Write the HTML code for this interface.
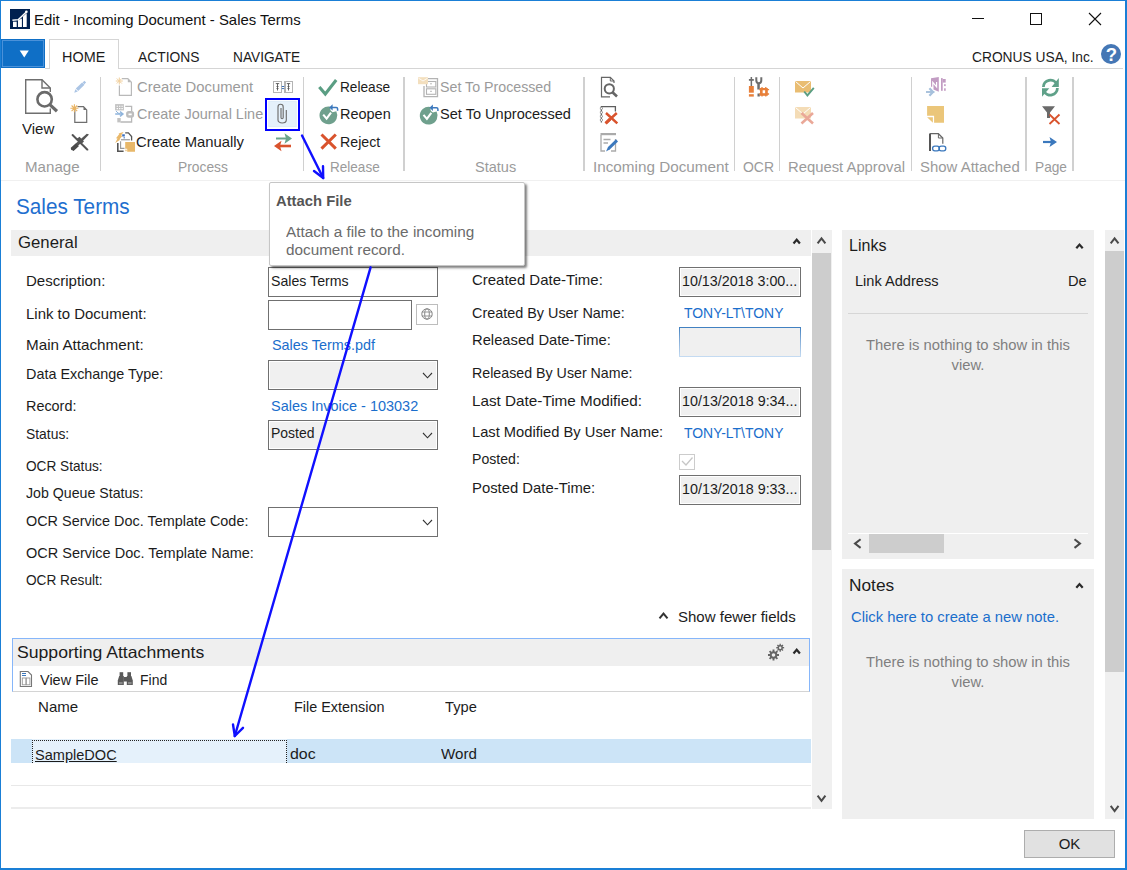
<!DOCTYPE html>
<html><head><meta charset="utf-8">
<style>
html,body{margin:0;padding:0;}
body{width:1127px;height:870px;position:relative;overflow:hidden;background:#fff;font-family:"Liberation Sans",sans-serif;color:#1c1c1c;}
.a{position:absolute;}
.t{position:absolute;white-space:nowrap;line-height:20px;}
svg{position:absolute;left:0;top:0;}
</style></head><body>

<div class="a" style="left:0px;top:0px;width:1127px;height:1px;background:#1a7fd6;"></div>
<div class="a" style="left:0px;top:0px;width:1px;height:870px;background:#1a7fd6;"></div>
<div class="a" style="left:1125px;top:0px;width:2px;height:870px;background:#1a7fd6;"></div>
<div class="a" style="left:0px;top:868px;width:1127px;height:2px;background:#1a7fd6;"></div>
<div class="t" style="left:34.45px;top:9.80px;font-size:15.00px;color:#111;transform-origin:0 0;transform:scaleX(0.9946);">Edit - Incoming Document - Sales Terms</div>
<div class="a" style="left:45px;top:68px;width:4px;height:1px;background:#d5d5d5;"></div>
<div class="a" style="left:119px;top:68px;width:1004px;height:1px;background:#d5d5d5;"></div>
<div class="a" style="left:49px;top:39px;width:70px;height:30px;box-sizing:border-box;border:1px solid #d5d5d5;border-bottom:none;background:#fff"></div>
<div class="t" style="left:61.80px;top:46.55px;font-size:14.30px;transform-origin:0 0;transform:scaleX(1.0092);">HOME</div>
<div class="t" style="left:137.90px;top:46.55px;font-size:14.30px;transform-origin:0 0;transform:scaleX(0.9676);">ACTIONS</div>
<div class="t" style="left:232.60px;top:46.55px;font-size:14.30px;transform-origin:0 0;transform:scaleX(0.9576);">NAVIGATE</div>
<div class="t" style="left:972.00px;top:46.55px;font-size:14.30px;transform-origin:0 0;transform:scaleX(0.9635);">CRONUS USA, Inc.</div>
<div class="a" style="left:1px;top:180px;width:1124px;height:1px;background:#f0f0f0;"></div>
<div class="t" style="left:22.18px;top:118.94px;font-size:14.60px;transform-origin:0 0;transform:scaleX(1.0295);">View</div>
<div class="t" style="left:24.58px;top:157.24px;font-size:14.60px;color:#9b9b9b;transform-origin:0 0;transform:scaleX(1.0351);">Manage</div>
<div class="t" style="left:178.38px;top:157.24px;font-size:14.60px;color:#9b9b9b;transform-origin:0 0;transform:scaleX(0.9465);">Process</div>
<div class="t" style="left:330.48px;top:157.24px;font-size:14.60px;color:#9b9b9b;transform-origin:0 0;transform:scaleX(0.9282);">Release</div>
<div class="t" style="left:474.68px;top:157.24px;font-size:14.60px;color:#9b9b9b;transform-origin:0 0;transform:scaleX(0.9958);">Status</div>
<div class="t" style="left:592.98px;top:157.24px;font-size:14.60px;color:#9b9b9b;transform-origin:0 0;transform:scaleX(1.0463);">Incoming Document</div>
<div class="t" style="left:742.98px;top:157.24px;font-size:14.60px;color:#9b9b9b;transform-origin:0 0;transform:scaleX(0.9557);">OCR</div>
<div class="t" style="left:788.18px;top:157.24px;font-size:14.60px;color:#9b9b9b;transform-origin:0 0;transform:scaleX(1.0155);">Request Approval</div>
<div class="t" style="left:919.98px;top:157.24px;font-size:14.60px;color:#9b9b9b;transform-origin:0 0;transform:scaleX(1.0239);">Show Attached</div>
<div class="t" style="left:1034.98px;top:157.24px;font-size:14.60px;color:#9b9b9b;transform-origin:0 0;transform:scaleX(0.9386);">Page</div>
<div class="a" style="left:100px;top:77px;width:1px;height:94px;background:#d0d0d0;"></div>
<div class="a" style="left:303px;top:77px;width:1px;height:94px;background:#d0d0d0;"></div>
<div class="a" style="left:403px;top:77px;width:2px;height:94px;background:#d0d0d0;"></div>
<div class="a" style="left:583px;top:77px;width:2px;height:94px;background:#d0d0d0;"></div>
<div class="a" style="left:734px;top:77px;width:1px;height:94px;background:#d0d0d0;"></div>
<div class="a" style="left:779px;top:77px;width:1px;height:94px;background:#d0d0d0;"></div>
<div class="a" style="left:911px;top:77px;width:1px;height:94px;background:#d0d0d0;"></div>
<div class="a" style="left:1025px;top:77px;width:2px;height:94px;background:#d0d0d0;"></div>
<div class="a" style="left:1072px;top:77px;width:2px;height:94px;background:#d0d0d0;"></div>
<div class="t" style="left:136.68px;top:76.94px;font-size:14.60px;color:#9b9b9b;transform-origin:0 0;transform:scaleX(1.0160);">Create Document</div>
<div class="t" style="left:136.68px;top:103.64px;font-size:14.60px;color:#9b9b9b;transform-origin:0 0;transform:scaleX(0.9908);">Create Journal Line</div>
<div class="t" style="left:136.38px;top:131.74px;font-size:14.60px;transform-origin:0 0;transform:scaleX(1.0163);">Create Manually</div>
<div class="t" style="left:339.98px;top:77.04px;font-size:14.60px;transform-origin:0 0;transform:scaleX(0.9356);">Release</div>
<div class="t" style="left:339.98px;top:103.74px;font-size:14.60px;transform-origin:0 0;transform:scaleX(0.9917);">Reopen</div>
<div class="t" style="left:339.98px;top:131.74px;font-size:14.60px;transform-origin:0 0;transform:scaleX(0.9716);">Reject</div>
<div class="t" style="left:440.18px;top:77.04px;font-size:14.60px;color:#9b9b9b;transform-origin:0 0;transform:scaleX(0.9744);">Set To Processed</div>
<div class="t" style="left:440.18px;top:103.64px;font-size:14.60px;transform-origin:0 0;transform:scaleX(0.9980);">Set To Unprocessed</div>
<div class="t" style="left:16.42px;top:196.85px;font-size:21.20px;color:#1f6fcf;transform-origin:0 0;transform:scaleX(0.9786);">Sales Terms</div>
<div class="a" style="left:11px;top:230px;width:800px;height:26px;background:#efefef;"></div>
<div class="t" style="left:18.45px;top:232.02px;font-size:16.40px;transform-origin:0 0;transform:scaleX(1.0221);">General</div>
<div class="a" style="left:812px;top:230px;width:20px;height:579px;background:#f0f0f0;"></div>
<div class="a" style="left:812px;top:253px;width:19px;height:297px;background:#cdcdcd;"></div>
<div class="t" style="left:25.58px;top:270.64px;font-size:14.60px;transform-origin:0 0;transform:scaleX(1.0303);">Description:</div>
<div class="t" style="left:25.58px;top:303.74px;font-size:14.60px;transform-origin:0 0;transform:scaleX(1.0253);">Link to Document:</div>
<div class="t" style="left:25.58px;top:335.34px;font-size:14.60px;transform-origin:0 0;transform:scaleX(1.0438);">Main Attachment:</div>
<div class="t" style="left:25.58px;top:363.74px;font-size:14.60px;transform-origin:0 0;transform:scaleX(0.9858);">Data Exchange Type:</div>
<div class="t" style="left:25.58px;top:395.74px;font-size:14.60px;transform-origin:0 0;transform:scaleX(0.9861);">Record:</div>
<div class="t" style="left:25.58px;top:423.64px;font-size:14.60px;transform-origin:0 0;transform:scaleX(0.9508);">Status:</div>
<div class="t" style="left:25.58px;top:455.84px;font-size:14.60px;transform-origin:0 0;transform:scaleX(0.9350);">OCR Status:</div>
<div class="t" style="left:25.58px;top:482.84px;font-size:14.60px;transform-origin:0 0;transform:scaleX(0.9711);">Job Queue Status:</div>
<div class="t" style="left:25.58px;top:510.94px;font-size:14.60px;transform-origin:0 0;transform:scaleX(0.9875);">OCR Service Doc. Template Code:</div>
<div class="t" style="left:25.58px;top:542.84px;font-size:14.60px;transform-origin:0 0;transform:scaleX(0.9940);">OCR Service Doc. Template Name:</div>
<div class="t" style="left:25.58px;top:569.84px;font-size:14.60px;transform-origin:0 0;transform:scaleX(0.9352);">OCR Result:</div>
<div class="a" style="left:268px;top:267px;width:170px;height:30px;box-sizing:border-box;border:1px solid #707070;background:#fff;"></div>
<div class="t" style="left:270.58px;top:270.94px;font-size:14.60px;transform-origin:0 0;transform:scaleX(0.9696);">Sales Terms</div>
<div class="a" style="left:268px;top:300px;width:144px;height:30px;box-sizing:border-box;border:1px solid #707070;background:#fff;"></div>
<div class="a" style="left:416px;top:304px;width:22px;height:21px;box-sizing:border-box;border:1px solid #bdbdbd;background:#fff;"></div>
<div class="t" style="left:271.88px;top:335.24px;font-size:14.60px;color:#1a6ecc;transform-origin:0 0;transform:scaleX(0.9859);">Sales Terms.pdf</div>
<div class="a" style="left:268px;top:360px;width:170px;height:30px;box-sizing:border-box;border:1px solid #707070;background:#f0f0f0;box-shadow:inset 0 0 0 1px #fff"></div>
<div class="t" style="left:271.38px;top:395.54px;font-size:14.60px;color:#1a6ecc;transform-origin:0 0;transform:scaleX(0.9915);">Sales Invoice - 103032</div>
<div class="a" style="left:268px;top:420px;width:170px;height:30px;box-sizing:border-box;border:1px solid #707070;background:#f0f0f0;box-shadow:inset 0 0 0 1px #fff"></div>
<div class="t" style="left:270.58px;top:423.34px;font-size:14.60px;transform-origin:0 0;transform:scaleX(0.9574);">Posted</div>
<div class="a" style="left:268px;top:507px;width:170px;height:30px;box-sizing:border-box;border:1px solid #707070;background:#fff;"></div>
<div class="t" style="left:472.38px;top:270.44px;font-size:14.60px;transform-origin:0 0;transform:scaleX(1.0250);">Created Date-Time:</div>
<div class="t" style="left:472.38px;top:302.64px;font-size:14.60px;transform-origin:0 0;transform:scaleX(0.9863);">Created By User Name:</div>
<div class="t" style="left:472.38px;top:330.34px;font-size:14.60px;transform-origin:0 0;transform:scaleX(1.0106);">Released Date-Time:</div>
<div class="t" style="left:472.38px;top:362.64px;font-size:14.60px;transform-origin:0 0;transform:scaleX(0.9748);">Released By User Name:</div>
<div class="t" style="left:472.38px;top:390.54px;font-size:14.60px;transform-origin:0 0;transform:scaleX(1.0456);">Last Date-Time Modified:</div>
<div class="t" style="left:472.38px;top:422.44px;font-size:14.60px;transform-origin:0 0;transform:scaleX(1.0074);">Last Modified By User Name:</div>
<div class="t" style="left:472.38px;top:449.04px;font-size:14.60px;transform-origin:0 0;transform:scaleX(0.9657);">Posted:</div>
<div class="t" style="left:472.38px;top:478.34px;font-size:14.60px;transform-origin:0 0;transform:scaleX(1.0171);">Posted Date-Time:</div>
<div class="a" style="left:679px;top:267px;width:122px;height:30px;box-sizing:border-box;border:1px solid #707070;background:#f0f0f0;box-shadow:inset 0 0 0 1px #fff"></div>
<div class="t" style="left:682.36px;top:270.97px;font-size:14.80px;transform-origin:0 0;transform:scaleX(0.9655);">10/13/2018 3:00...</div>
<div class="t" style="left:683.68px;top:302.74px;font-size:14.60px;color:#1a6ecc;transform-origin:0 0;transform:scaleX(0.9560);">TONY-LT\TONY</div>
<div class="a" style="left:679px;top:327px;width:122px;height:30px;box-sizing:border-box;border:1px solid #5b8fc7;border-image:linear-gradient(#3f7fc0,#7fa9d6 40%,#c6dcf2) 1;background:#f0f0f0"></div>
<div class="a" style="left:679px;top:387px;width:122px;height:30px;box-sizing:border-box;border:1px solid #707070;background:#f0f0f0;box-shadow:inset 0 0 0 1px #fff"></div>
<div class="t" style="left:682.36px;top:390.67px;font-size:14.80px;transform-origin:0 0;transform:scaleX(0.9680);">10/13/2018 9:34...</div>
<div class="t" style="left:683.68px;top:422.54px;font-size:14.60px;color:#1a6ecc;transform-origin:0 0;transform:scaleX(0.9560);">TONY-LT\TONY</div>
<div class="a" style="left:679px;top:454px;width:16px;height:16px;box-sizing:border-box;border:1px solid #cccccc;background:#fff;"></div>
<div class="a" style="left:679px;top:475px;width:122px;height:30px;box-sizing:border-box;border:1px solid #707070;background:#f0f0f0;box-shadow:inset 0 0 0 1px #fff"></div>
<div class="t" style="left:682.36px;top:478.87px;font-size:14.80px;transform-origin:0 0;transform:scaleX(0.9680);">10/13/2018 9:33...</div>
<div class="t" style="left:678.48px;top:606.54px;font-size:14.60px;transform-origin:0 0;transform:scaleX(1.0291);">Show fewer fields</div>
<div class="a" style="left:12px;top:638px;width:798px;height:54px;box-sizing:border-box;border:1px solid #86b6fa;border-bottom:1px solid #d4d4d4"></div>
<div class="a" style="left:13px;top:639px;width:796px;height:27px;background:#efefef;"></div>
<div class="t" style="left:17.24px;top:641.98px;font-size:16.50px;transform-origin:0 0;transform:scaleX(1.0685);">Supporting Attachments</div>
<div class="t" style="left:39.88px;top:669.74px;font-size:14.60px;transform-origin:0 0;transform:scaleX(0.9923);">View File</div>
<div class="t" style="left:139.88px;top:669.74px;font-size:14.60px;transform-origin:0 0;transform:scaleX(0.9581);">Find</div>
<div class="t" style="left:38.28px;top:696.84px;font-size:14.60px;transform-origin:0 0;transform:scaleX(1.0324);">Name</div>
<div class="t" style="left:294.48px;top:696.64px;font-size:14.60px;transform-origin:0 0;transform:scaleX(0.9861);">File Extension</div>
<div class="t" style="left:444.88px;top:696.64px;font-size:14.60px;transform-origin:0 0;transform:scaleX(1.0050);">Type</div>
<div class="a" style="left:11px;top:739px;width:800px;height:24px;background:#cce4f7;"></div>
<div class="a" style="left:32px;top:739px;width:255px;height:24px;background:#e5f1fb;"></div>
<div class="a" style="left:32px;top:740px;width:255px;height:23px;box-sizing:border-box;border-top:1px dotted #222;border-left:1px dotted #222;border-right:1px dotted #222"></div>
<div class="t" style="left:35.28px;top:744.74px;font-size:14.60px;text-decoration:underline;transform-origin:0 0;transform:scaleX(0.9973);">SampleDOC</div>
<div class="t" style="left:290.38px;top:744.14px;font-size:14.60px;transform-origin:0 0;transform:scaleX(1.0922);">doc</div>
<div class="t" style="left:441.38px;top:744.14px;font-size:14.60px;transform-origin:0 0;transform:scaleX(1.0373);">Word</div>
<div class="a" style="left:11px;top:785px;width:800px;height:1px;background:#e8e8e8;"></div>
<div class="a" style="left:11px;top:807px;width:800px;height:2px;background:#ececec;"></div>
<div class="a" style="left:842px;top:230px;width:252px;height:329px;background:#efefef;"></div>
<div class="t" style="left:849.25px;top:234.82px;font-size:16.40px;transform-origin:0 0;transform:scaleX(0.9774);">Links</div>
<div class="t" style="left:854.68px;top:271.14px;font-size:14.60px;transform-origin:0 0;transform:scaleX(0.9993);">Link Address</div>
<div class="t" style="left:1068.48px;top:271.14px;font-size:14.60px;transform-origin:0 0;transform:scaleX(1.0023);">De</div>
<div class="a" style="left:848px;top:313px;width:240px;height:1px;background:#d6d6d6;"></div>
<div class="a" style="left:848px;top:335.27px;width:240px;text-align:center;line-height:20px;font-size:14.8px;color:#7f7f7f">There is nothing to show in this<br>view.</div>
<div class="a" style="left:848px;top:533px;width:240px;height:1px;background:#ffffff;"></div>
<div class="a" style="left:869px;top:534px;width:75px;height:19px;background:#cdcdcd;"></div>
<div class="a" style="left:842px;top:569px;width:252px;height:250px;background:#efefef;"></div>
<div class="t" style="left:849.25px;top:574.72px;font-size:16.40px;transform-origin:0 0;transform:scaleX(1.0554);">Notes</div>
<div class="t" style="left:851.38px;top:606.64px;font-size:14.60px;color:#1a6ecc;transform-origin:0 0;transform:scaleX(1.0135);">Click here to create a new note.</div>
<div class="a" style="left:848px;top:651.67px;width:240px;text-align:center;line-height:20px;font-size:14.8px;color:#7f7f7f">There is nothing to show in this<br>view.</div>
<div class="a" style="left:1105px;top:230px;width:19px;height:589px;background:#f0f0f0;"></div>
<div class="a" style="left:1105px;top:251px;width:19px;height:421px;background:#cdcdcd;"></div>
<div class="a" style="left:1024px;top:830px;width:91px;height:28px;box-sizing:border-box;border:1px solid #adadad;background:#e1e1e1"></div>
<div class="a" style="left:1024px;top:834px;width:91px;text-align:center;line-height:20px;font-size:15px">OK</div>
<div class="a" style="left:269px;top:182px;width:256px;height:84px;box-sizing:border-box;border:1px solid #c6c6c6;border-radius:2px;background:#fff;box-shadow:2px 2px 2.5px rgba(0,0,0,0.5)"></div>
<div class="t" style="left:275.58px;top:191.34px;font-size:14.60px;color:#555;font-weight:bold;transform-origin:0 0;transform:scaleX(1.0146);">Attach File</div>
<div class="t" style="left:285.64px;top:221.53px;font-size:15.20px;color:#6b6b6b;transform-origin:0 0;transform:scaleX(1.0087);">Attach a file to the incoming</div>
<div class="t" style="left:285.64px;top:239.93px;font-size:15.20px;color:#6b6b6b;transform-origin:0 0;transform:scaleX(1.0060);">document record.</div>
<svg width="1127" height="870" viewBox="0 0 1127 870"><!-- app icon -->
<rect x="10" y="9" width="20" height="20" fill="#00204f"/>
<rect x="13" y="21.7" width="3.7" height="5.3" fill="#fff"/>
<polygon points="18,20.2 21.9,18.4 21.9,27 18,27" fill="#fff"/>
<polygon points="23,16.6 26.7,13 26.7,27 23,27" fill="#fff"/>
<polyline points="12.4,20.3 18.4,19.6 26.3,11.9" fill="none" stroke="#fff" stroke-width="1.4"/>
<circle cx="26.4" cy="11.8" r="1.3" fill="#fff"/>
<!-- window controls -->
<rect x="972" y="18" width="12" height="1" fill="#111"/>
<rect x="1030.5" y="13.5" width="11" height="11" fill="none" stroke="#111" stroke-width="1"/>
<path d="M1089,13 L1101,25 M1101,13 L1089,25" stroke="#111" stroke-width="1.1"/>
<!-- blue dropdown -->
<rect x="1" y="39" width="44" height="29" fill="#0f6fc6"/>
<rect x="2.5" y="40.5" width="41" height="26" fill="none" stroke="#4a91d9" stroke-width="1"/>
<polygon points="19.7,50.4 28.8,50.4 24.25,57.4" fill="#fff"/>
<!-- help -->
<circle cx="1111" cy="54" r="10" fill="#4577b5"/>
<text x="1111.3" y="61.2" font-family="Liberation Sans" font-weight="bold" font-size="18.5" fill="#fff" text-anchor="middle">?</text>

<!-- View icon -->
<g fill="none" stroke="#6f6f6f" stroke-width="1.4">
<path d="M50.3,92 V88 L42,79.7 H25.7 V113.3 H50.3 V108.5"/>
<path d="M42,79.7 V88 H50.3"/>
</g>
<circle cx="44.6" cy="99.3" r="7.2" fill="#fff" stroke="#6a6a6a" stroke-width="2.6"/>
<line x1="49.8" y1="104.6" x2="57" y2="111.2" stroke="#6a6a6a" stroke-width="3.2"/>
<!-- pencil disabled -->
<line x1="77" y1="89.8" x2="83.3" y2="83.6" stroke="#abc5e5" stroke-width="3.4"/>
<path d="M74.3,92.7 L75.3,89.3 L77.8,91.6 Z" fill="#abc5e5"/>
<path d="M82.6,82.6 L84.4,80.8 L86.1,82.5 L84.3,84.3 Z" fill="#abc5e5"/>
<!-- new doc -->
<path d="M77.5,106.7 H83.5 L86.7,109.9 V122.3 H74.8 V110" fill="none" stroke="#6f6f6f" stroke-width="1.2"/>
<path d="M83.5,106.7 L86.7,109.9 H83.5 Z" fill="#6f6f6f"/>
<g stroke="#e9b464" stroke-width="1.1">
<path d="M74.4,104.3 V112.3 M70.4,108.3 H78.4 M71.6,105.5 L77.2,111.1 M77.2,105.5 L71.6,111.1"/>
</g>
<circle cx="74.4" cy="108.3" r="1.6" fill="#e9b464"/>
<!-- delete -->
<path d="M71.2,150 L70.8,147.8 L86.8,133.8 L89,134.4 L87.8,135.8 L73.6,150.6 Z" fill="#555"/>
<path d="M70.8,148.5 L76,143.5 L78.8,146.2 L73.5,151 Z" fill="#4a4a4a"/>
<path d="M71.8,134.3 L73,134 L88.4,149.2 L88.2,150.6 L86.8,150.4 L71.6,135.6 Z" fill="#555"/>
<path d="M76.5,139 L79.5,136.8 L84,141.5 L81.3,144 Z" fill="#555"/>
<!-- create document (disabled) -->
<g stroke="#f1cf9c" stroke-width="1">
<path d="M119.3,77.5 V84.5 M115.8,81 H122.8 M116.8,78.5 L121.8,83.5 M121.8,78.5 L116.8,83.5"/>
</g>
<path d="M122,78.6 H127.8 L131.4,82.2 V95.3 H119.4 V85.5" fill="none" stroke="#b9b9b9" stroke-width="1.2"/>
<path d="M127.8,78.6 L131.4,82.2 H127.8 Z" fill="#b9b9b9"/>
<!-- create journal line (disabled) -->
<rect x="115.1" y="104.1" width="8.8" height="6.3" fill="#c2c2c2"/>
<path d="M116.6,106.3 h1.4 M119,106.3 h1.4 M121.4,106.3 h1.4 M116.6,108.6 h1.4 M119,108.6 h1.4 M121.4,108.6 h1.4" stroke="#fff" stroke-width="1.1"/>
<path d="M125.2,106.3 H131.6 V122 H120.5" fill="none" stroke="#b8b8b8" stroke-width="1.3"/>
<rect x="117.3" y="118" width="3.4" height="4.4" fill="#c2c2c2"/>
<path d="M115.2,114 H122.5 M120,111.6 L123,114 L120,116.4" fill="none" stroke="#8fb4dc" stroke-width="1.4"/>
<path d="M116,111 Q118,113.5 120,114" fill="none" stroke="#8fb4dc" stroke-width="1"/>
<rect x="127.3" y="112.2" width="5.6" height="4.3" rx="1.4" fill="#fff" stroke="#bdbdbd" stroke-width="2.4"/>
<!-- create manually -->
<path d="M115.2,143 L117.5,138.5 L116,138.2 L119.5,133.8 L118.2,133.6 L123.6,131.9 L121,135.6 L122.5,135.8 L119.3,139.5 L120.6,139.6 Z" fill="#e9b86a"/>
<rect x="122.2" y="134.3" width="2.6" height="2.2" fill="#3a6fc0"/>
<rect x="123.6" y="137.2" width="1.2" height="1.2" fill="#3a6fc0"/>
<path d="M125.2,132.9 H128.4 L131.6,136.6 V140.6" fill="none" stroke="#555" stroke-width="1.3"/>
<rect x="121" y="139" width="8.9" height="1.4" fill="#a8a8a8"/>
<path d="M120.6,141.2 V148.4 H124.5" fill="none" stroke="#999" stroke-width="1.1"/>
<path d="M117.8,143 V151.2 H123.6" fill="none" stroke="#555" stroke-width="1.6"/>
<path d="M125.2,142 H135 V151.8 H127.2 V148.8 H125.2 Z" fill="#e8b86a"/>
<rect x="125.4" y="149.6" width="1.2" height="1.6" fill="#e8b86a"/>

<!-- columns icon -->
<rect x="273.5" y="81.5" width="8" height="11" fill="#fff" stroke="#b4b4b4" stroke-width="1"/>
<rect x="284.5" y="81.5" width="8" height="11" fill="#fff" stroke="#b4b4b4" stroke-width="1"/>
<path d="M275.8,83.6 H279.2 M277.5,83.6 V90.5 M276.5,86.5 H278.5 M276.5,88.5 H278.5" stroke="#555" stroke-width="0.9"/>
<path d="M286.8,83.6 H290.2 M288.5,83.6 V90.5 M287.5,86.5 H289.5 M287.5,88.5 H289.5" stroke="#555" stroke-width="0.9"/>
<rect x="284.5" y="81.5" width="1.5" height="11" fill="#b4b4b4"/>
<path d="M281.8,86.5 H284.2 M281.8,88.6 H284.2" stroke="#3a70b8" stroke-width="1"/>
<!-- paperclip highlighted -->
<rect x="266" y="99" width="33" height="31" fill="#fff" stroke="#0000ff" stroke-width="2"/>
<rect x="268.8" y="101.3" width="27.4" height="25.4" fill="#e5f1fb" stroke="#d8e8f7" stroke-width="0.8"/>
<path d="M286.3,110 V120 A4.15,3 0 0 1 278,120 V107 A2.5,2.6 0 0 1 283.2,107 V117.5 A1.1,1.2 0 0 1 281,117.5 V108" fill="none" stroke="#6e6e6e" stroke-width="1.15"/>
<!-- swap arrows -->
<path d="M276,138.5 H287" stroke="#6aa58c" stroke-width="2"/>
<path d="M284.5,133.2 L292,138.5 L284.5,143.8 L286,138.5 Z" fill="#6aa58c"/>
<path d="M279,146 H291" stroke="#d9532d" stroke-width="2.6"/>
<path d="M281.5,140.8 L274,146 L281.5,151.2 L280,146 Z" fill="#d9532d"/>

<!-- release check -->
<polyline points="319.3,87 325.3,94 336.2,80" fill="none" stroke="#5a9e83" stroke-width="3.1"/>
<!-- reopen -->
<g transform="translate(0.0,0.0)">
<path d="M329.8,106.6 A8.9,8.9 0 1 0 336.3,111.3 L332.6,112.3 L330.6,110.6 Z" fill="#6fa08d"/>
<polyline points="323.2,114.6 326.6,118.6 331,112.6" fill="none" stroke="#fff" stroke-width="2.1"/>
<path d="M329.2,107.4 L332.6,104.2 V110.6 Z" fill="#3b78bd"/>
<path d="M332,107.4 H336.2 Q337.6,107.4 337.6,108.8 V110.8" fill="none" stroke="#3b78bd" stroke-width="1.5"/>
</g>
<!-- reject -->
<path d="M321.5,134.5 L335.8,148.6 M335.8,134.5 L321.5,148.6" stroke="#d9532d" stroke-width="3"/>

<!-- set to processed (disabled) -->
<path d="M424,86 V96.6 H437.5 V78.6 H427" fill="none" stroke="#b3b3b3" stroke-width="1.3"/>
<rect x="426.5" y="81.5" width="9.3" height="5.5" fill="none" stroke="#b3b3b3" stroke-width="1.1"/>
<rect x="426.5" y="88.8" width="9.3" height="5.5" fill="none" stroke="#b3b3b3" stroke-width="1.1"/>
<path d="M430,83.8 h2 M430,91.3 h2" stroke="#b3b3b3" stroke-width="0.9"/>
<rect x="418" y="77.2" width="10" height="7" fill="#f3dfbe"/>
<path d="M418.5,78.2 L423,81 L427.5,78.2" fill="none" stroke="#fff" stroke-width="0.8"/>
<!-- set to unprocessed -->
<g transform="translate(100.3,0.3)">
<path d="M329.8,106.6 A8.9,8.9 0 1 0 336.3,111.3 L332.6,112.3 L330.6,110.6 Z" fill="#6fa08d"/>
<polyline points="323.2,114.6 326.6,118.6 331,112.6" fill="none" stroke="#fff" stroke-width="2.1"/>
<path d="M329.2,107.4 L332.6,104.2 V110.6 Z" fill="#3b78bd"/>
<path d="M332,107.4 H336.2 Q337.6,107.4 337.6,108.8 V110.8" fill="none" stroke="#3b78bd" stroke-width="1.5"/>
</g>

<!-- incoming doc: view -->
<path d="M614,83 V81 L610.3,77.3 H601.5 V96.8 H610" fill="none" stroke="#666" stroke-width="1.2"/>
<path d="M610.3,77.3 V81 H614" fill="none" stroke="#666" stroke-width="1"/>
<circle cx="609.3" cy="88.8" r="4.6" fill="#fff" stroke="#666" stroke-width="2"/>
<line x1="612.5" y1="92.3" x2="617" y2="96.5" stroke="#666" stroke-width="2.6"/>
<!-- incoming doc: remove -->
<path d="M601.4,122.6 V106.6 H615.4 V111.6" fill="none" stroke="#5e5e5e" stroke-width="1.3"/>
<path d="M599.9,108.4 L601.4,107.0 L602.9,108.4 L601.4,109.8 Z" fill="#fff" stroke="#666" stroke-width="0.7"/>
<path d="M599.9,112.4 L601.4,111.0 L602.9,112.4 L601.4,113.8 Z" fill="#fff" stroke="#666" stroke-width="0.7"/>
<path d="M599.9,116.4 L601.4,115.0 L602.9,116.4 L601.4,117.8 Z" fill="#fff" stroke="#666" stroke-width="0.7"/>
<path d="M599.9,120.0 L601.4,118.6 L602.9,120.0 L601.4,121.4 Z" fill="#fff" stroke="#666" stroke-width="0.7"/>
<path d="M606,113 L617.3,123.3 M616.8,113 L605.6,123.4" stroke="#d9532d" stroke-width="2.5"/>
<path d="M605.6,123.4 L610,119.2" stroke="#d9532d" stroke-width="3.2"/>
<!-- incoming doc: form + pen -->
<rect x="600.5" y="133" width="15.5" height="2.2" fill="#aaa"/>
<path d="M601,135 V151 H605 M611,151 H615.5 V139" fill="none" stroke="#aaa" stroke-width="1.3"/>
<path d="M603.5,139.5 H610.5 M603.5,143 H608" stroke="#aaa" stroke-width="1.3"/>
<path d="M606,151.5 L608,147 L616,139.3 L618,141.5 L610,149.2 Z" fill="#3b78bd"/>

<!-- OCR -->
<rect x="748.9" y="79" width="4.9" height="1.8" fill="#6e6e6e"/>
<rect x="750.6" y="77" width="1.5" height="9" fill="#6e6e6e"/>
<rect x="748.9" y="86" width="4.9" height="6.7" fill="#e8803a"/>
<rect x="748.9" y="94.2" width="4.9" height="2.4" fill="#e8803a"/>
<path d="M756.3,77.2 V80.3 Q756.3,83.3 758.8,83.3 Q761.3,83.3 761.3,80.3 V77.2" fill="none" stroke="#6e6e6e" stroke-width="2"/>
<rect x="757.3" y="83" width="2.5" height="6.5" fill="#6e6e6e"/>
<rect x="757.5" y="93.5" width="2.3" height="3" fill="#6e6e6e"/>
<rect x="761" y="89" width="5.8" height="5.8" fill="none" stroke="#e8803a" stroke-width="2"/>
<path d="M762,87 V96.6 M765.8,87 V96.6 M759.2,89.6 H769.1 M759.2,94 H769.1" stroke="#e8803a" stroke-width="1.3"/>
<!-- send approval -->
<rect x="795" y="81" width="16" height="11.5" fill="#e9bd72"/>
<path d="M795.5,81.5 L803,88 L810.5,81.5" fill="none" stroke="#fff" stroke-width="1"/>
<polyline points="804.2,91.5 807.4,95.4 813.8,87.8" fill="none" stroke="#5a9e83" stroke-width="1.9"/>
<!-- cancel approval disabled -->
<rect x="795" y="107" width="16" height="11.5" fill="#f4dcb6"/>
<path d="M795.5,107.5 L803,114 L810.5,107.5" fill="none" stroke="#fff" stroke-width="1"/>
<path d="M801.5,113 L813,123.5 M813,113 L801.5,123.5" stroke="#eaa898" stroke-width="2.6"/>

<!-- OneNote disabled -->
<g fill="#c29cc3">
<path d="M931,78.2 L938.8,76.9 V91.7 L933.5,89.5 V86.7 H931 Z"/>
<rect x="941" y="78.1" width="1.7" height="12.7"/>
<rect x="942.7" y="79" width="3" height="3.6"/>
<rect x="944.1" y="84.2" width="1.6" height="1.9"/>
<rect x="944.1" y="88.3" width="1.6" height="2.5"/>
</g>
<path d="M932.8,87.3 V82.4 L936.6,86.8 V82.1" fill="none" stroke="#fff" stroke-width="1.2"/>
<path d="M926,92 H934.4" stroke="#a6c0dc" stroke-width="1.9"/>
<path d="M929.4,88.2 L933,92 L929.4,95.8" fill="none" stroke="#a6c0dc" stroke-width="2.2"/>
<!-- note -->
<path d="M927.1,106 H944 V122.8 H934.1 V115.7 H927.1 Z" fill="#ebc67a"/>
<path d="M927.1,117.2 H932.9 V122.8 Z" fill="#ebc67a"/>
<!-- attached link doc -->
<path d="M930,133.5 V151" stroke="#555" stroke-width="2"/>
<path d="M930,133.7 H938.4 L942.8,138 V143.8" fill="none" stroke="#666" stroke-width="1.2"/>
<path d="M938.4,133.7 V138 H942.8" fill="none" stroke="#666" stroke-width="1"/>
<rect x="932.6" y="146.2" width="6.8" height="4.6" rx="2.2" fill="none" stroke="#3b78bd" stroke-width="1.3"/>
<rect x="939" y="146.2" width="6.8" height="4.6" rx="2.2" fill="none" stroke="#3b78bd" stroke-width="1.3"/>
<!-- refresh -->
<path d="M1043.40,87.10 A7.0,7.0 0 0 1 1056.74,84.14" fill="none" stroke="#5fa189" stroke-width="2.8"/>
<path d="M1057.40,88.10 A7.0,7.0 0 0 1 1044.06,91.06" fill="none" stroke="#5fa189" stroke-width="2.8"/>
<path d="M1051.6,87 H1058.8 V78 Z" fill="#5fa189"/>
<path d="M1049.3,88.2 H1042 V96.8 Z" fill="#5fa189"/>
<!-- clear filter -->
<path d="M1042,106.3 H1055 L1050,112.5 V118 H1047 V112.5 Z" fill="#6a6a6a"/>
<path d="M1049.5,114.5 L1059.5,124 M1059.5,114.5 L1049.5,124" stroke="#d9532d" stroke-width="1.8"/>
<!-- next -->
<path d="M1043,142 H1053" stroke="#3b78bd" stroke-width="2.2"/>
<path d="M1049.5,137 L1057,142 L1049.5,147 L1051,142 Z" fill="#3b78bd"/>

<!-- fasttab chevrons -->
<polyline points="793.5,243.5 796.7,239.8 799.9,243.5" fill="none" stroke="#2a2a2a" stroke-width="2.2"/>
<polyline points="793.5,653.5 796.7,649.8 799.9,653.5" fill="none" stroke="#2a2a2a" stroke-width="2.2"/>
<polyline points="1076.3,248.3 1079.5,244.6 1082.7,248.3" fill="none" stroke="#2a2a2a" stroke-width="2.2"/>
<polyline points="1076.3,587.8 1079.5,584.1 1082.7,587.8" fill="none" stroke="#2a2a2a" stroke-width="2.2"/>
<polyline points="659.5,618.3 663.5,613.5 667.5,618.3" fill="none" stroke="#333" stroke-width="2"/>
<!-- scrollbar arrows -->
<polyline points="817.6,243.4 821.5,238.3 825.4,243.4" fill="none" stroke="#4a4a4a" stroke-width="2"/>
<polyline points="817.6,795.6 821.5,800.9 825.4,795.6" fill="none" stroke="#4a4a4a" stroke-width="2"/>
<polyline points="1110.7,243.4 1114.6,238.3 1118.5,243.4" fill="none" stroke="#4a4a4a" stroke-width="2"/>
<polyline points="1110.7,805.8 1114.6,811 1118.5,805.8" fill="none" stroke="#4a4a4a" stroke-width="2"/>
<!-- links h-scroll arrows -->
<polyline points="860.6,539.3 855,543.6 860.6,547.9" fill="none" stroke="#4a4a4a" stroke-width="2"/>
<polyline points="1074.5,539.3 1080,543.6 1074.5,547.9" fill="none" stroke="#4a4a4a" stroke-width="2"/>
<!-- select chevrons -->
<polyline points="423,373 427.5,377.8 432,373" fill="none" stroke="#333" stroke-width="1.1"/>
<polyline points="423,433 427.5,437.8 432,433" fill="none" stroke="#333" stroke-width="1.1"/>
<polyline points="423,520 427.5,524.8 432,520" fill="none" stroke="#333" stroke-width="1.1"/>
<!-- globe -->
<circle cx="427" cy="314" r="5.2" fill="none" stroke="#8a8a8a" stroke-width="1"/>
<ellipse cx="427" cy="314" rx="2.3" ry="5.2" fill="none" stroke="#8a8a8a" stroke-width="1"/>
<path d="M421.8,312 H432.2 M421.8,316 H432.2" stroke="#8a8a8a" stroke-width="0.9"/>
<!-- checkbox check -->
<polyline points="682,461 686,465 692.5,457.5" fill="none" stroke="#c6c6c6" stroke-width="1.3"/>

<!-- view file icon -->
<path d="M20.3,671.5 H28 L31.5,675 V686.5 H20.3 Z" fill="#fff" stroke="#777" stroke-width="1.1"/>
<path d="M22,673.5 H26 M22,675.5 H26" stroke="#3b78bd" stroke-width="1"/>
<rect x="22.3" y="678" width="3.6" height="6.8" fill="none" stroke="#999" stroke-width="0.9"/>
<rect x="26.3" y="678" width="3.6" height="6.8" fill="none" stroke="#999" stroke-width="0.9"/>
<!-- binoculars -->
<g fill="#5a5a5a">
<rect x="119.6" y="672.2" width="3.6" height="4.5"/>
<rect x="127.4" y="672.2" width="3.6" height="4.5"/>
<path d="M119.2,676 H123.8 V685 H117.8 V680.5 Z"/>
<path d="M126.8,676 H131.4 L132.8,680.5 V685 H126.8 Z"/>
<rect x="123.5" y="677" width="3.6" height="4.5"/>
</g>
<rect x="119" y="682" width="3.6" height="2.2" fill="#8a8a8a"/>
<rect x="128" y="682" width="3.6" height="2.2" fill="#8a8a8a"/>
<!-- gears -->
<path d="M777.29,654.07 L779.01,654.02 L779.01,655.98 L777.29,655.93 L776.83,657.02 L778.09,658.20 L776.70,659.59 L775.52,658.33 L774.43,658.79 L774.48,660.51 L772.52,660.51 L772.57,658.79 L771.48,658.33 L770.30,659.59 L768.91,658.20 L770.17,657.02 L769.71,655.93 L767.99,655.98 L767.99,654.02 L769.71,654.07 L770.17,652.98 L768.91,651.80 L770.30,650.41 L771.48,651.67 L772.57,651.21 L772.52,649.49 L774.48,649.49 L774.43,651.21 L775.52,651.67 L776.70,650.41 L778.09,651.80 L776.83,652.98 Z M775.30,655.00 A1.80,1.80 0 1 0 771.70,655.00 A1.80,1.80 0 1 0 775.30,655.00 Z" fill="#666" fill-rule="evenodd"/>
<path d="M782.92,647.04 L784.14,647.00 L784.14,648.40 L782.92,648.36 L782.59,649.15 L783.48,649.99 L782.49,650.98 L781.65,650.09 L780.86,650.42 L780.90,651.64 L779.50,651.64 L779.54,650.42 L778.75,650.09 L777.91,650.98 L776.92,649.99 L777.81,649.15 L777.48,648.36 L776.26,648.40 L776.26,647.00 L777.48,647.04 L777.81,646.25 L776.92,645.41 L777.91,644.42 L778.75,645.31 L779.54,644.98 L779.50,643.76 L780.90,643.76 L780.86,644.98 L781.65,645.31 L782.49,644.42 L783.48,645.41 L782.59,646.25 Z M781.40,647.70 A1.20,1.20 0 1 0 779.00,647.70 A1.20,1.20 0 1 0 781.40,647.70 Z" fill="#666" fill-rule="evenodd"/>
<!-- annotation arrows -->
<g stroke="#1010ff" stroke-width="2.4" fill="none" stroke-linecap="round" stroke-linejoin="round">
<line x1="302" y1="135.5" x2="323.2" y2="178"/>
<polyline points="314,171 323.2,178 323,166.3"/>
<line x1="370.6" y1="267.3" x2="234.8" y2="736"/>
<polyline points="233,724.5 234.8,736 243,727.8"/>
</g>
</svg>
</body></html>
